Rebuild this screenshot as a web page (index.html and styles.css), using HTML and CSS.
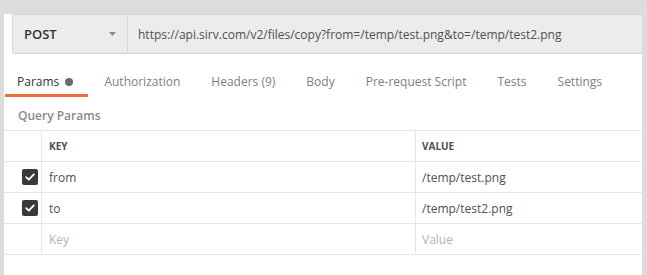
FILE: index.html
```html
<!DOCTYPE html>
<html lang="en">
  <head>
    <meta charset="UTF-8" />
    <title>Request - Query Params</title>
    <link rel="stylesheet" href="styles.css">
  </head>
  <body>
    <div class="panel">
      <!-- Request bar -->
      <div class="request-bar">
        <div class="method">
          <span>POST</span>
          <svg class="caret" width="7" height="4" viewBox="0 0 7 4"><path d="M0 0h7L3.5 4z" fill="#8a8a8a"/></svg>
        </div>
        <div class="url">https://api.sirv.com/v2/files/copy?from=/temp/test.png&amp;to=/temp/test2.png</div>
      </div>

      <!-- Tabs -->
      <div class="tabs">
        <div class="tab active">Params <span class="dot"></span></div>
        <div class="tab">Authorization</div>
        <div class="tab">Headers (9)</div>
        <div class="tab">Body</div>
        <div class="tab">Pre-request Script</div>
        <div class="tab">Tests</div>
        <div class="tab">Settings</div>
      </div>

      <div class="section-title">Query Params</div>

      <!-- Params table -->
      <div class="params">
        <div class="row head">
          <div class="cell check"></div>
          <div class="cell key">KEY</div>
          <div class="cell value">VALUE</div>
        </div>
        <div class="row">
          <div class="cell check"><span class="box"><svg width="10" height="8" viewBox="0 0 10 8"><path d="M1.2 4.2l2.6 2.4L8.8 1.4" fill="none" stroke="#fff" stroke-width="1.8" stroke-linecap="round" stroke-linejoin="round"/></svg></span></div>
          <div class="cell key">from</div>
          <div class="cell value">/temp/test.png</div>
        </div>
        <div class="row">
          <div class="cell check"><span class="box"><svg width="10" height="8" viewBox="0 0 10 8"><path d="M1.2 4.2l2.6 2.4L8.8 1.4" fill="none" stroke="#fff" stroke-width="1.8" stroke-linecap="round" stroke-linejoin="round"/></svg></span></div>
          <div class="cell key">to</div>
          <div class="cell value">/temp/test2.png</div>
        </div>
        <div class="row empty">
          <div class="cell check"></div>
          <div class="cell key">Key</div>
          <div class="cell value">Value</div>
        </div>
      </div>
    </div>
  </body>
</html>
```

FILE: styles.css
```css
/* Base */
* {
  margin: 0;
  padding: 0;
  box-sizing: border-box;
}

body {
  font-family: "Open Sans", "Liberation Sans", sans-serif;
  font-size: 12px;
  color: #505050;
  background: #dcdcdc;
  height: 275px;
  padding: 4px 5px 4px 4px;
}

.panel {
  background: #fff;
  height: 267px;
}

/* Request bar */
.request-bar {
  display: flex;
  height: 40px;
  margin: 10px 0 0 8px;
  background: #ececec;
  border: 1px solid #d6d6d6;
  border-right: none;
  border-radius: 2px 0 0 2px;
}

.method {
  width: 115px;
  display: flex;
  align-items: center;
  justify-content: space-between;
  padding: 0 11px 0 11px;
  border-right: 1px solid #d6d6d6;
  font-size: 13px;
  font-weight: 600;
  color: #333;
}

.url {
  display: flex;
  align-items: center;
  padding-left: 10px;
  color: #505050;
}

/* Tabs */
.tabs {
  display: flex;
  gap: 4px;
  padding-left: 1px;
}

.tab {
  padding: 21px 15px 5px 12px;
  line-height: 14px;
  color: #808080;
  border-bottom: 3px solid transparent;
  white-space: nowrap;
}

.tab.active {
  color: #333;
  border-bottom-color: #f26b3a;
}

.dot {
  display: inline-block;
  width: 8px;
  height: 8px;
  margin-left: 3px;
  border-radius: 50%;
  background: #6a6a6a;
}

.section-title {
  padding: 12px 0 0 14px;
  line-height: 14px;
  height: 33px;
  font-weight: 600;
  color: #8a8a8a;
}

/* Params table */
.params {
  border-top: 1px solid #e6e6e6;
}

.row {
  display: flex;
  height: 31px;
  border-bottom: 1px solid #e6e6e6;
}

.cell {
  display: flex;
  align-items: center;
}

.check {
  width: 38px;
  padding-left: 18px;
  border-right: 1px solid #e6e6e6;
}

.key {
  width: 374px;
  padding-left: 7px;
  border-right: 1px solid #e6e6e6;
}

.value {
  flex: 1;
  padding-left: 6px;
}

.head .cell {
  font-size: 10px;
  font-weight: 700;
  color: #505050;
}

.box {
  width: 16px;
  height: 16px;
  border-radius: 2px;
  background: #3a3a3a;
  display: flex;
  align-items: center;
  justify-content: center;
}

.empty .cell {
  color: #b3b3b3;
}
```
